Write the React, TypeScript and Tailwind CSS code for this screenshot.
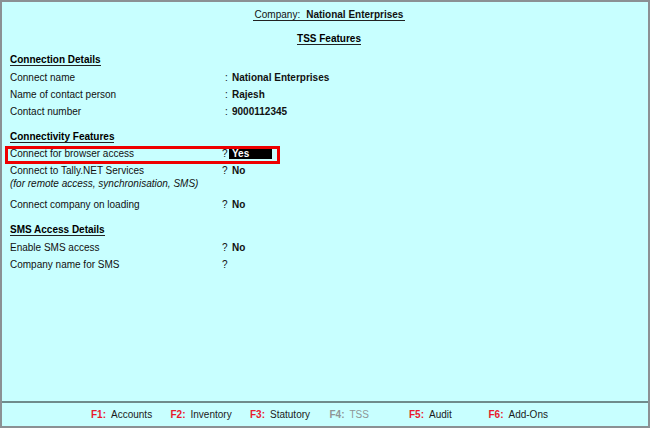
const font = { fontFamily: '"Liberation Sans", Arial, sans-serif' }

type Row = { label: string; sep: ':' | '?'; value?: string; note?: string }

function Heading({ children }: { children: React.ReactNode }) {
  return (
    <span className="block border-b border-[#222] font-bold leading-[11px] text-black">
      {children}
    </span>
  )
}

function FieldRow({ label, sep, value, note }: Row) {
  const lh = note ? 'leading-[13px]' : 'leading-[17px]'
  return (
    <div className="flex">
      <div className="w-[212px]">
        <div className={lh}>{label}</div>
        {note ? <div className="italic leading-[13px]">{note}</div> : null}
      </div>
      <div className={`w-[10px] ${lh} ${sep === ':' ? 'pl-[3px]' : ''}`}>{sep}</div>
      <div className={`font-bold ${lh}`}>{value}</div>
    </div>
  )
}

const footerKeys = [
  { key: 'F1:', label: 'Accounts' },
  { key: 'F2:', label: 'Inventory' },
  { key: 'F3:', label: 'Statutory' },
  { key: 'F4:', label: 'TSS', disabled: true },
  { key: 'F5:', label: 'Audit' },
  { key: 'F6:', label: 'Add-Ons' },
]

export default function App() {
  return (
    <div
      className="flex h-[428px] w-[650px] flex-col border-2 border-[#8b9194] bg-[#c8ffff] text-[10px] leading-[17px] text-[#111]"
      style={font}
    >
      <div className="flex-1 pl-[8px] pt-[7px]">
        <div className="flex justify-center">
          <span className="block border-b border-[#222] px-[2px] leading-[11px]">
            Company:<span className="ml-[6px] font-bold">National Enterprises</span>
          </span>
        </div>
        <div className="mt-[12px] flex justify-center">
          <Heading>TSS Features</Heading>
        </div>

        <div className="mt-[9px] flex">
          <Heading>Connection Details</Heading>
        </div>
        <div className="mt-[3px]">
          <FieldRow label="Connect name" sep=":" value="National Enterprises" />
          <FieldRow label="Name of contact person" sep=":" value="Rajesh" />
          <FieldRow label="Contact number" sep=":" value="9000112345" />
        </div>

        <div className="mt-[11px] flex">
          <Heading>Connectivity Features</Heading>
        </div>
        <div className="relative mt-[2px] flex h-[17px] items-center">
          <div className="w-[212px] leading-[17px]">Connect for browser access</div>
          <div className="w-[7px] leading-[17px]">?</div>
          <span className="block h-[11px] w-[43px] bg-black pl-[3px] font-bold leading-[11px] text-white">
            Yes
          </span>
          <div className="absolute -left-[5px] top-[1px] h-[18px] w-[275px] border-[3px] border-[#ee0000]" />
        </div>
        <div className="mt-[2px]">
          <FieldRow
            label="Connect to Tally.NET Services"
            sep="?"
            value="No"
            note="(for remote access, synchronisation, SMS)"
          />
        </div>
        <div className="mt-[6px]">
          <FieldRow label="Connect company on loading" sep="?" value="No" />
        </div>

        <div className="mt-[11px] flex">
          <Heading>SMS Access Details</Heading>
        </div>
        <div className="mt-[3px]">
          <FieldRow label="Enable SMS access" sep="?" value="No" />
          <FieldRow label="Company name for SMS" sep="?" />
        </div>
      </div>

      <div className="flex h-[25px] items-center border-t-2 border-[#6f8c8c] pl-[89px]">
        {footerKeys.map((f) => (
          <div key={f.key} className="flex w-[79.5px] shrink-0 items-center">
            <span
              className={`block w-[20px] font-bold ${f.disabled ? 'text-[#8f9596]' : 'text-[#e8192c]'}`}
            >
              {f.key}
            </span>
            <span className={f.disabled ? 'text-[#8f9596]' : 'text-[#1b1b1b]'}>{f.label}</span>
          </div>
        ))}
      </div>
    </div>
  )
}
